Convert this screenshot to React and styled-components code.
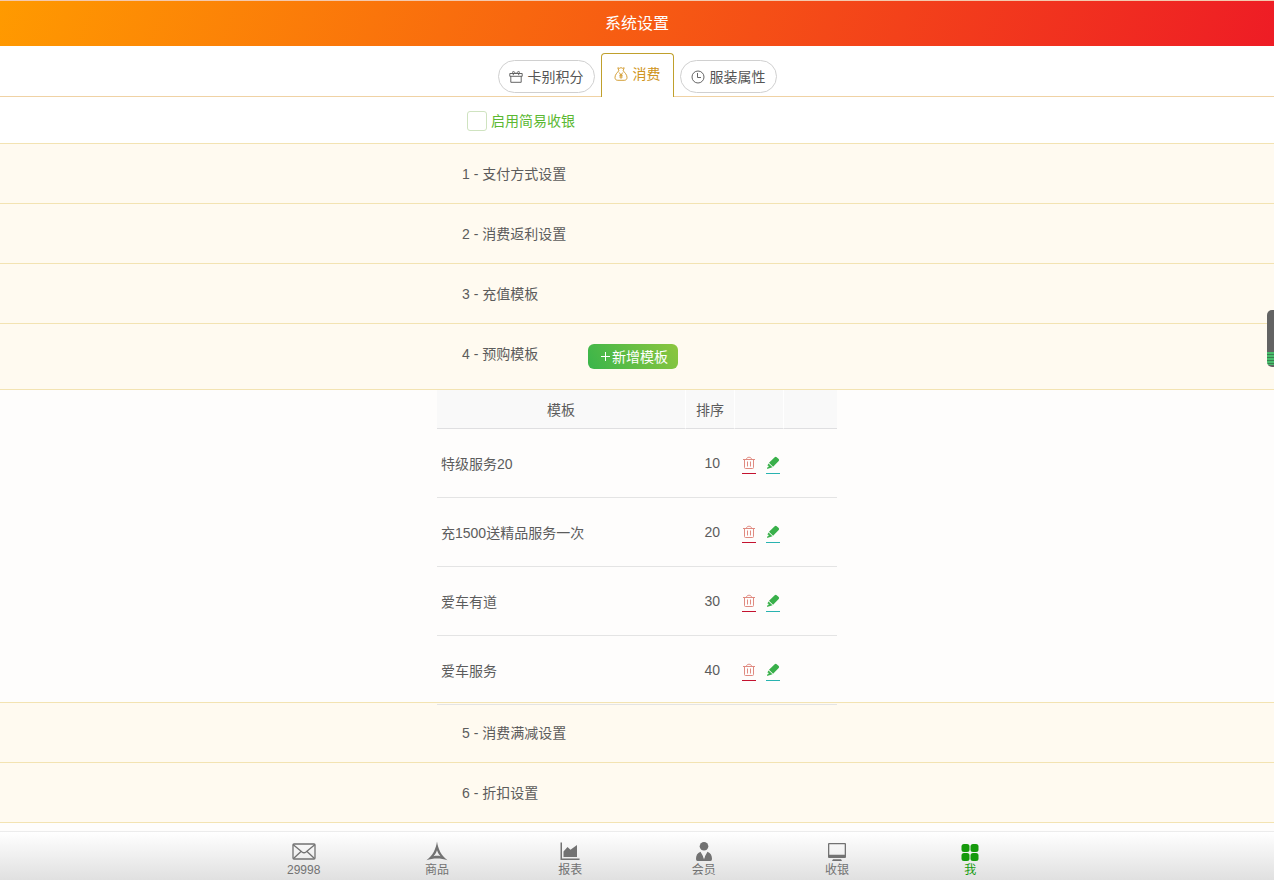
import React from "react";
import styled, { createGlobalStyle } from "styled-components";

const GlobalStyle = createGlobalStyle`
  * { box-sizing: border-box; }
  body {
    margin: 0;
    font-family: "Liberation Sans", "Noto Sans CJK SC", sans-serif;
    font-size: 14px;
    line-height: 20px;
    color: #5c5c5c;
  }
  button { font: inherit; cursor: pointer; }
  svg { display: block; }
`;

const Page = styled.div`
  display: flex;
  flex-direction: column;
  height: 100vh;
  background: #fefdfc;
`;

const Header = styled.header`
  flex: none;
  height: 46px;
  border-top: 1px solid #f3c9ae;
  background: linear-gradient(110deg, #ff9a00 0%, #ee1c25 100%);
  color: #fff;
  text-align: center;
`;

const Title = styled.h1`
  margin: 0;
  font-size: 16px;
  font-weight: 400;
  line-height: 46px;
`;

const Main = styled.main`
  flex: 1;
  min-height: 0;
  overflow-y: auto;
  scrollbar-width: none;
`;

const TabBar = styled.nav`
  display: flex;
  justify-content: center;
  align-items: flex-end;
  gap: 6px;
  height: 51px;
  border-bottom: 1px solid #f0d2a4;
  background: #fff;
`;

const Tab = styled.button`
  display: flex;
  align-items: center;
  gap: 5px;
  height: 33px;
  margin-bottom: 3px;
  padding: 0 10px;
  border: 1px solid #d0d0d0;
  border-radius: 17px;
  background: #fff;
  color: #555;
`;

const ActiveTab = styled(Tab)`
  height: 44px;
  margin-bottom: -1px;
  padding: 0 12px 4px;
  border-color: #c0a02c;
  border-bottom: 0;
  border-radius: 4px 4px 0 0;
  color: #cf9420;
`;

const OptionRow = styled.div`
  height: 47px;
  border-bottom: 1px solid #f3e3b2;
  background: #fff;
`;

const Column = styled.div`
  display: flex;
  width: 400px;
  max-width: 100%;
  margin: 0 auto;
`;

const Option = styled.label`
  display: flex;
  align-items: center;
  gap: 4px;
  height: 48px;
  padding-left: 30px;
  color: #5bb832;
`;

const Checkbox = styled.input`
  appearance: none;
  width: 20px;
  height: 20px;
  margin: 0;
  border: 1px solid #cfe3c0;
  border-radius: 3px;
  background: #fff;
  &:checked { background: #5bb832; }
`;

const Section = styled.section`
  min-height: ${(p) => (p.$open ? 66 : 60)}px;
  padding-top: 20px;
  border-bottom: 1px solid #f3e3b2;
  background: #fffaf0;
`;

const SectionTitle = styled.h2`
  width: 151px;
  margin: 0;
  padding-left: 25px;
  font-size: 14px;
  font-weight: 400;
  white-space: nowrap;
`;

const AddButton = styled.button`
  display: flex;
  align-items: center;
  gap: 1px;
  height: 25px;
  padding: 0 10px 0 12px;
  border: 0;
  border-radius: 6px;
  background: linear-gradient(60deg, #39b54a, #8dc63f);
  color: #fff;
`;

const Panel = styled.div`
  border-bottom: 1px solid #f3e3b2;
  height: 313px;
`;

const Table = styled.table`
  position: relative;
  width: 400px;
  max-width: 100%;
  margin: 0 auto;
  border-collapse: separate;
  border-spacing: 0;
  table-layout: fixed;
`;

const Th = styled.th`
  width: ${(p) => p.$width}px;
  height: 39px;
  padding: 2px 0 0;
  border-bottom: 1px solid #dfdfe1;
  border-right: 1px solid #fff;
  background: #f9f9f9;
  font-weight: 400;
  &:last-child { border-right: 0; }
`;

const Td = styled.td`
  height: 69px;
  padding: ${(p) => p.$pad || "0"};
  border-bottom: 1px solid #e4e4e4;
  text-align: ${(p) => p.$align || "left"};
`;

const Actions = styled.div`
  display: flex;
  gap: 10px;
`;

const IconButton = styled.button`
  display: flex;
  justify-content: center;
  width: 14px;
  height: 18px;
  padding: 0;
  border: 0;
  border-bottom: 1px solid ${(p) => p.$line};
  background: none;
  color: ${(p) => p.$color};
`;

const Footer = styled.footer`
  flex: none;
  border-top: 1px solid #ececec;
  background: linear-gradient(#fff, #e0e0e0);
`;

const FooterNav = styled.nav`
  display: flex;
  width: 800px;
  max-width: 100%;
  height: 48px;
  margin: 0 auto;
`;

const FooterLink = styled.a`
  flex: 1;
  display: flex;
  flex-direction: column;
  align-items: center;
  padding-top: 9px;
  color: ${(p) => (p.$active ? "#159a0c" : "#727272")};
  font-size: 12px;
  line-height: 18px;
  text-decoration: none;
`;

const SideHandle = styled.div`
  position: fixed;
  top: 310px;
  right: 0;
  width: 7px;
  height: 57px;
  border-radius: 5px 0 0 5px;
  background:
    repeating-linear-gradient(#48bd6c 0 2px, #39804f 2px 3px) 0 42px / 100% 13px no-repeat,
    #636363;
`;

const GiftIcon = () => (
  <svg width="14" height="14" viewBox="0 0 14 14" fill="none" stroke="currentColor" strokeWidth=".9">
    <path d="M.8 3.500h12.400v2.800H.8zM1.800 6.300v6h10.400v-6M4.300 3.500C2.500 1.500 4.300.3 7 3.500M9.700 3.500C11.500 1.500 9.700.3 7 3.500M4.300 3.500v1.700M9.700 3.500v1.700" />
  </svg>
);

const MoneyBagIcon = () => (
  <svg width="14" height="14" viewBox="0 0 14 14" fill="none" stroke="currentColor" strokeWidth=".9">
    <path d="M5 4 3.800.8l1.800.5L7 .6l1.400.7 1.800-.5L9 4M4.600 4C3.500 5.500 1 7.500 1 10.300c0 2 1 3 2.800 3h6.400c1.800 0 2.800-1 2.800-3C13 7.500 10.500 5.500 9.400 4M5.200 5.500 7 8l1.800-2.500M7 8v3.800M5.300 8.300h3.400M5.300 10h3.400" />
  </svg>
);

const ClockIcon = () => (
  <svg width="14" height="14" viewBox="0 0 14 14" fill="none" stroke="currentColor" strokeWidth=".9">
    <circle cx="7" cy="7" r="6" />
    <path d="M6.500 3v4.500H10" />
  </svg>
);

const PlusIcon = () => (
  <svg width="11" height="11" viewBox="0 0 11 11" stroke="currentColor">
    <path d="M5.500 1v9M1 5.500h9" />
  </svg>
);

const TrashIcon = () => (
  <svg width="14" height="14" viewBox="0 0 14 14" fill="none" stroke="currentColor">
    <path d="M1 3.500h12M4.500 3.200C4.500.6 9.500.6 9.500 3.200M2.500 4v7.500q0 1 1 1h7q1 0 1-1V4M5.500 5.500v5M8.500 5.500v5" />
  </svg>
);

const PencilIcon = () => (
  <svg width="14" height="14" viewBox="0 0 14 14" fill="currentColor">
    <path d="M8.700 1.200q1-.9 2 0l2 1.900q.9.900 0 1.900L7.100 10.700 3 6.800zM2.500 7.400l4 3.900L1 13l.4-1.800 1.200-.2-.2-1.300-1-.2z" />
  </svg>
);

const MailIcon = () => (
  <svg width="24" height="20" viewBox="0 0 24 20" fill="none" stroke="currentColor" strokeWidth="1.300">
    <rect x="1" y="3" width="22" height="15" rx="1" />
    <path d="m1 3.500 9 7.500q2 1.500 4 0l9-7.500M1.500 17.500l7.500-7M22.500 17.500l-7.500-7" />
  </svg>
);

const GoodsIcon = () => (
  <svg width="24" height="20" viewBox="0 0 24 20" fill="currentColor">
    <path fillRule="evenodd" d="M12 .5c1.300 8 4 13.500 10.500 18.800-6.500-2.300-14.500-2.300-21 0C8 14 10.700 8.500 12 .5zm0 8.700c-1 2.800-2 4.500-3.500 6.100 2.400-.6 4.600-.6 7 0C14 13.700 13 12 12 9.200z" />
  </svg>
);

const ReportIcon = () => (
  <svg width="24" height="20" viewBox="0 0 24 20" fill="currentColor">
    <path d="M2.500 1.500H4v16h17.500V19h-19zM5.500 16v-5.500L9.500 6l3 2.800L19 4v12z" />
  </svg>
);

const MemberIcon = () => (
  <svg width="24" height="20" viewBox="0 0 24 20" fill="currentColor">
    <circle cx="12" cy="5.300" r="4.300" />
    <path d="M8.500 10.800 12 17l3.500-6.200c3.300 1.200 4.500 4 4.500 7.200q0 2-1.500 2h-13Q4 20 4 18c0-3.200 1.200-6 4.500-7.200z" />
    <path d="m12 13 1 2-1 3.500-1-3.500z" fill="#f2f2f2" />
  </svg>
);

const CashierIcon = () => (
  <svg width="24" height="20" viewBox="0 0 24 20" fill="currentColor">
    <path fillRule="evenodd" d="M4 2h16q1 0 1 1v13q0 1-1 1H4q-1 0-1-1V3q0-1 1-1zm.3 1.300v10.400h15.400V3.300z" />
    <path d="M8 18.300h8l1 1.700H7z" />
  </svg>
);

const MeIcon = () => (
  <svg width="24" height="20" viewBox="0 0 24 20" fill="currentColor">
    <rect x="3.500" y="3" width="8" height="8" rx="2.500" />
    <rect x="12.500" y="3" width="8" height="8" rx="2.500" />
    <rect x="3.500" y="12" width="8" height="8" rx="2.500" />
    <rect x="12.500" y="12" width="8" height="8" rx="2.500" />
  </svg>
);

const templates = [
  { name: "特级服务20", order: 10 },
  { name: "充1500送精品服务一次", order: 20 },
  { name: "爱车有道", order: 30 },
  { name: "爱车服务", order: 40 },
];

const links = [
  { label: "29998", Icon: MailIcon },
  { label: "商品", Icon: GoodsIcon },
  { label: "报表", Icon: ReportIcon },
  { label: "会员", Icon: MemberIcon },
  { label: "收银", Icon: CashierIcon },
  { label: "我", Icon: MeIcon, active: true },
];

const SettingSection = ({ title, children }) => (
  <Section $open={Boolean(children)}>
    <Column>
      <SectionTitle>{title}</SectionTitle>
      {children}
    </Column>
  </Section>
);

export default function App() {
  return (
    <Page>
      <GlobalStyle />
      <Header>
        <Title>系统设置</Title>
      </Header>
      <Main>
        <TabBar>
          <Tab type="button"><GiftIcon />卡别积分</Tab>
          <ActiveTab type="button" aria-current="page"><MoneyBagIcon />消费</ActiveTab>
          <Tab type="button"><ClockIcon />服装属性</Tab>
        </TabBar>
        <OptionRow>
          <Column>
            <Option htmlFor="simple-cashier">
              <Checkbox id="simple-cashier" type="checkbox" />
              启用简易收银
            </Option>
          </Column>
        </OptionRow>
        <SettingSection title="1 - 支付方式设置" />
        <SettingSection title="2 - 消费返利设置" />
        <SettingSection title="3 - 充值模板" />
        <SettingSection title="4 - 预购模板">
          <AddButton type="button"><PlusIcon />新增模板</AddButton>
        </SettingSection>
        <Panel>
          <Table>
            <thead>
              <tr>
                <Th $width={249}>模板</Th>
                <Th $width={49}>排序</Th>
                <Th $width={49} />
                <Th $width={53} />
              </tr>
            </thead>
            <tbody>
              {templates.map((t) => (
                <tr key={t.order}>
                  <Td $pad="2px 0 0 4px">{t.name}</Td>
                  <Td $pad="0 15px 0 0" $align="right">{t.order}</Td>
                  <Td $pad="4px 0 0 7px">
                    <Actions>
                      <IconButton type="button" aria-label="删除" $color="#e08a80" $line="#c4122f"><TrashIcon /></IconButton>
                      <IconButton type="button" aria-label="编辑" $color="#39b04a" $line="#29b3b0"><PencilIcon /></IconButton>
                    </Actions>
                  </Td>
                  <Td />
                </tr>
              ))}
            </tbody>
          </Table>
        </Panel>
        <SettingSection title="5 - 消费满减设置" />
        <SettingSection title="6 - 折扣设置" />
      </Main>
      <Footer>
        <FooterNav>
          {links.map(({ label, Icon, active }) => (
            <FooterLink key={label} href="#" $active={active}>
              <Icon />
              {label}
            </FooterLink>
          ))}
        </FooterNav>
      </Footer>
      <SideHandle />
    </Page>
  );
}
